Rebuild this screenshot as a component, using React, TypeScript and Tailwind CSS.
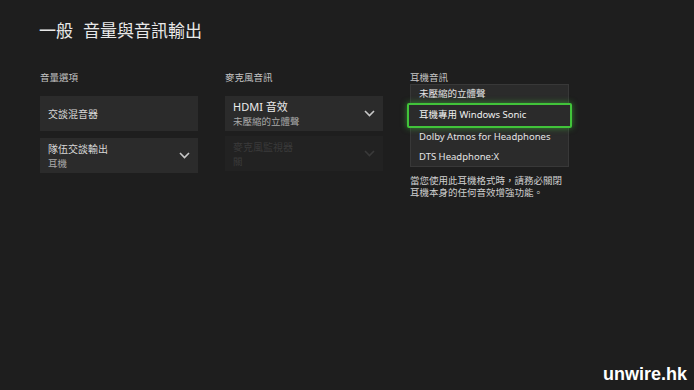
import React from "react";

const FONT = { fontFamily: '"Noto Sans", "Noto Sans CJK TC", sans-serif' };

function Chevron({ dim = false }: { dim?: boolean }) {
  return (
    <svg width="11" height="7" viewBox="0 0 11 7" className="shrink-0">
      <polyline
        points="1,1 5.5,5.5 10,1"
        fill="none"
        stroke={dim ? "#3a3a3a" : "#c8c8c8"}
        strokeWidth="1.6"
      />
    </svg>
  );
}

function Box({ children, chevron }: { children: React.ReactNode; chevron?: boolean }) {
  return (
    <div className="flex h-[35px] items-center justify-between bg-[#2b2b2b] pl-2 pr-[8px]">
      <div className="flex flex-col">{children}</div>
      {chevron && <Chevron />}
    </div>
  );
}

const OPTIONS = [
  { label: "未壓縮的立體聲", h: "h-[17px]" },
  { label: "耳機專用 Windows Sonic", h: "h-[25px]" },
  { label: "Dolby Atmos for Headphones", h: "h-[19px]" },
  { label: "DTS Headphone:X", h: "h-[21px]" },
];

export default function App() {
  return (
    <div className="relative h-[390px] w-[694px] overflow-hidden bg-[#1e1e1e] text-[#e6e6e6]" style={FONT}>
      <h1 className="flex gap-[10px] pl-[39px] pt-[19px] text-[17px] leading-[24px] text-[#e8e8e8]">
        <span>一般</span>
        <span>音量與音訊輸出</span>
      </h1>

      <div className="mt-[29px] flex gap-[27px] pl-10">
        {/* 音量選項 */}
        <div className="flex w-[158px] flex-col">
          <div className="h-3 text-[9.5px] leading-3 text-[#c4c4c4]">音量選項</div>
          <div className="mt-3 flex flex-col gap-[7px]">
            <Box>
              <span className="text-[10px] leading-3 text-[#d8d8d8]">交談混音器</span>
            </Box>
            <Box chevron>
              <span className="text-[10px] leading-[16px] text-[#d8d8d8]">隊伍交談輸出</span>
              <span className="text-[9.5px] leading-[14px] text-[#a8a8a8]">耳機</span>
            </Box>
          </div>
        </div>

        {/* 麥克風音訊 */}
        <div className="flex w-[158px] flex-col">
          <div className="h-3 text-[9.5px] leading-3 text-[#c4c4c4]">麥克風音訊</div>
          <div className="mt-3 flex flex-col gap-[5px]">
            <Box chevron>
              <span className="text-[11px] leading-[16px] text-[#ececec]">HDMI 音效</span>
              <span className="text-[9.5px] leading-[14px] text-[#a8a8a8]">未壓縮的立體聲</span>
            </Box>
            <div className="flex h-[35px] items-center justify-between bg-[#222222] pl-2 pr-[8px]">
              <div className="flex flex-col">
                <span className="text-[10px] leading-[16px] text-[#3a3a3a]">麥克風監視器</span>
                <span className="text-[9.5px] leading-[14px] text-[#3a3a3a]">關</span>
              </div>
              <Chevron dim />
            </div>
          </div>
        </div>

        {/* 耳機音訊 */}
        <div className="flex w-[159px] flex-col">
          <div className="h-3 text-[9.5px] leading-3 text-[#c4c4c4]">耳機音訊</div>
          <div className="flex h-[83px] flex-col border border-[#383838] bg-[#2b2b2b] pt-[1px]">
            {OPTIONS.map((o, i) =>
              i === 1 ? (
                <div
                  key={o.label}
                  className={`-mx-[4px] flex ${o.h} shrink-0 items-center rounded-[2px] border-2 border-[#41c43a] bg-[#2b2b2b] pl-[10px] text-[9.5px] text-[#f0f0f0] shadow-[0_0_6px_rgba(65,196,58,0.6)]`}
                >
                  {o.label}
                </div>
              ) : (
                <div key={o.label} className={`flex ${o.h} shrink-0 items-center pl-[8px] text-[9.5px] text-[#e4e4e4]`}>
                  {o.label}
                </div>
              )
            )}
          </div>
          <p className="mt-[8px] text-[9.5px] leading-[12px] text-[#cfcfcf]">
            當您使用此耳機格式時，請務必關閉
            <br />
            耳機本身的任何音效增強功能。
          </p>
        </div>
      </div>

      <div
        className="absolute bottom-[4px] right-[7px] text-[18px] font-bold leading-[24px] text-white"
        style={{ fontFamily: '"Liberation Sans", Arial, sans-serif' }}
      >
        unwire.hk
      </div>
    </div>
  );
}
